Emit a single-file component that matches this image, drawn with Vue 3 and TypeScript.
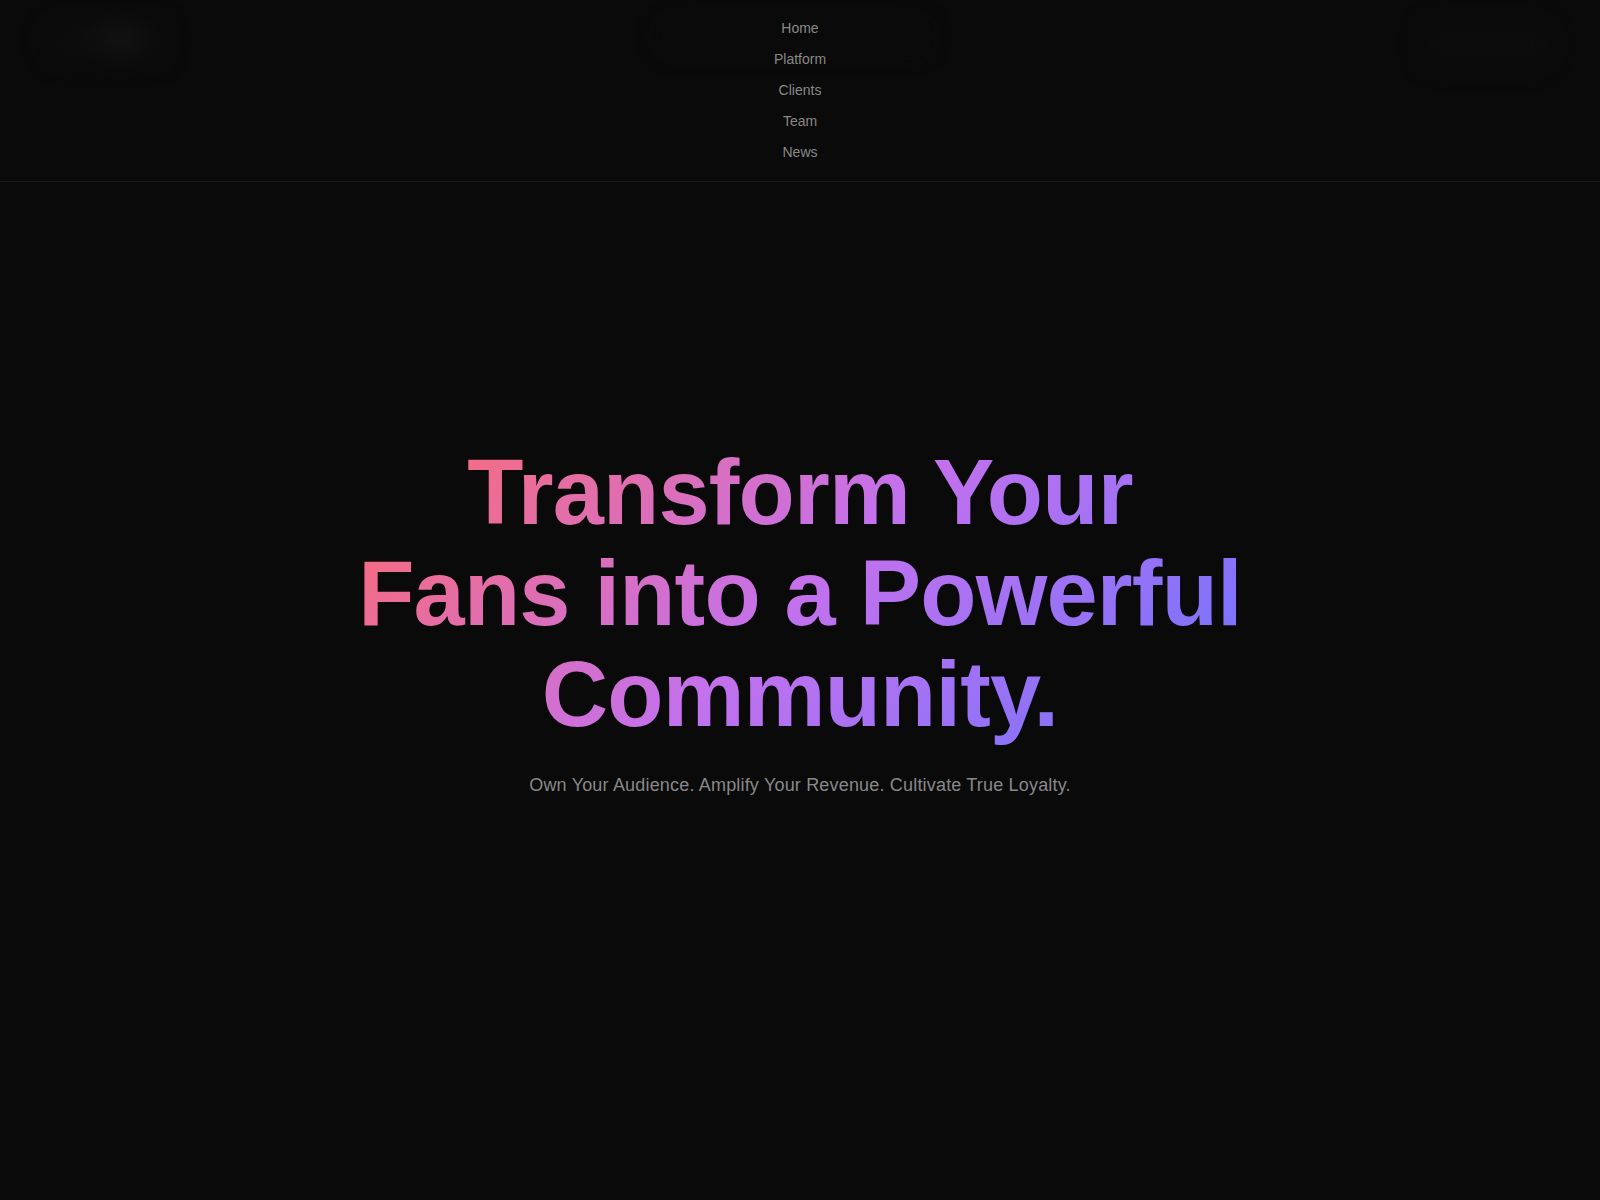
<script setup lang="ts">
const links: string[] = ['Home', 'Platform', 'Clients', 'Team', 'News']
</script>

<template>
  <div class="page">
    <header class="header">
      <div class="logo" aria-hidden="true"><span class="logo-core"></span></div>
      <div class="nav-wrap">
        <div class="nav-ghost" aria-hidden="true"></div>
        <nav class="nav">
          <a v-for="l in links" :key="l" class="link">{{ l }}</a>
        </nav>
      </div>
      <div class="cta" aria-hidden="true"></div>
    </header>
    <main class="hero">
      <h1 class="title">Transform Your<br />Fans into a Powerful<br />Community.</h1>
      <p class="sub">Own Your Audience. Amplify Your Revenue. Cultivate True Loyalty.</p>
    </main>
  </div>
</template>

<style>
html, body { margin: 0; background: #0a0a0a; }
</style>

<style scoped>
.page {
  min-height: 1200px;
  display: flex;
  flex-direction: column;
  background: #0a0a0a;
  font-family: "Liberation Sans", Arial, sans-serif;
}
.header {
  height: 181px;
  display: grid;
  grid-template-columns: 1fr auto 1fr;
  align-items: start;
  background: #0a0a0a;
  border-bottom: 1px solid #1a1a1a;
  overflow: hidden;
}
.logo {
  position: relative;
  justify-self: start;
  width: 112px;
  height: 34px;
  margin: 24px 0 0 50px;
  background: #0d0d0d;
  border-radius: 8px;
  filter: blur(12px);
}
.logo-core {
  position: absolute;
  left: 46px;
  top: 4px;
  width: 46px;
  height: 22px;
  border-radius: 50%;
  background: #161616;
}
.nav-wrap {
  position: relative;
}
.nav-ghost {
  position: absolute;
  left: calc(50% - 6px);
  top: 26px;
  width: 260px;
  height: 22px;
  transform: translateX(-50%);
  background: #0b0b0b;
  border-radius: 8px;
  filter: blur(12px);
}
.nav {
  position: relative;
  display: flex;
  flex-direction: column;
  align-items: center;
  gap: 15px;
  padding-top: 20px;
}
.link {
  font-size: 14px;
  line-height: 16px;
  color: #888888;
}
.cta {
  justify-self: end;
  width: 120px;
  height: 36px;
  margin: 26px 53px 0 0;
  background: #0d0d0d;
  border-radius: 8px;
  filter: blur(12px);
}
.hero {
  flex: 1;
  display: flex;
  flex-direction: column;
  align-items: center;
  padding-top: 260px;
}
.title {
  margin: 0;
  width: fit-content;
  font-size: 92px;
  line-height: 101px;
  font-weight: 700;
  letter-spacing: -0.8px;
  text-align: center;
  background: linear-gradient(135deg, #ff6b6b, #c471ed 50%, #6b73ff);
  -webkit-background-clip: text;
  background-clip: text;
  color: transparent;
}
.sub {
  margin: 27px 0 0;
  font-size: 18px;
  line-height: 27px;
  letter-spacing: 0.01em;
  color: #888888;
}
</style>
